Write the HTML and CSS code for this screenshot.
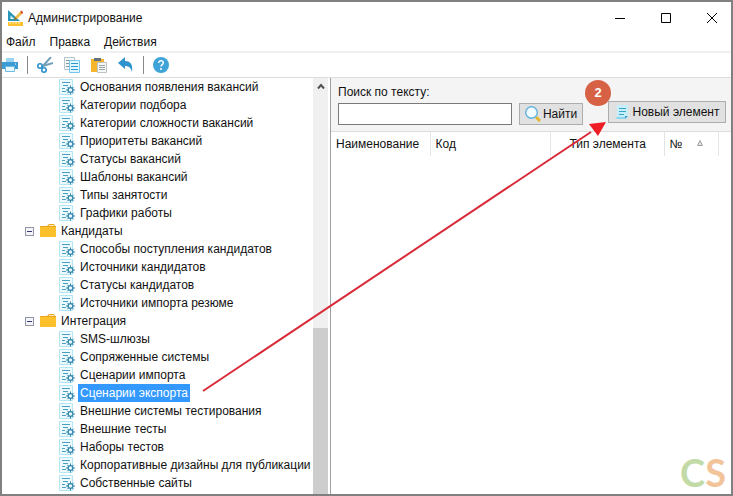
FILE: index.html
```html
<!DOCTYPE html>
<html lang="ru">
<head>
<meta charset="utf-8">
<title>Администрирование</title>
<link rel="stylesheet" href="styles.css">
</head>
<body>
<svg class="sprite" aria-hidden="true">
  <symbol id="doc" viewBox="0 0 16 16">
    <path d="M.5.5h13v15H.5z" fill="#edfafe" stroke="#b3e6f5"/>
    <path d="M3 3.500h8M4 6.500h5M3 9.500h3M3 12.500h4" stroke="#4c9fc4"/>
    <path d="M11.500 6.500v9M7 11h9M8.300 7.800l6.400 6.400M14.700 7.800l-6.400 6.400" stroke="#3285ac"/>
    <circle cx="11.500" cy="11" r="2.400" fill="#e8f8fd" stroke="#3285ac" stroke-width="1.300"/>
  </symbol>
  <symbol id="folder" viewBox="0 0 16 14">
    <path d="M0 2h7l2-2h5l1 2h1v11H0z" fill="#e9a61c"/>
    <path d="M9 1.500h5" stroke="#fff0c0"/>
    <path d="M0 3h16v10H0z" fill="#fcc02c"/>
  </symbol>
</svg>
<div class="window">
  <header class="titlebar">
    <svg class="app-icon" viewBox="0 0 16 16" aria-hidden="true">
      <path d="M1 0v11h12z" fill="#2796b8"/><path d="M3.500 5.500v3.500h4z" fill="#e4f7fc"/>
      <path d="M7 10l1-3 6-6 2 2-6 6z" fill="#eebd45"/><path d="M13 2l1.500-1.500 2 2L15 4z" fill="#d85532"/><path d="M7 10l1-3 2 2z" fill="#7a5a31"/>
      <path d="M1 12h15v4H1z" fill="#fcc22e"/><path d="M3 12v2M6 12v2M9 12v2M12 12v2" stroke="#fff0bd"/>
    </svg>
    <h1>Администрирование</h1>
    <div class="controls">
      <button aria-label="Свернуть"><svg viewBox="0 0 10 10"><path d="M0 5.500h10" /></svg></button>
      <button aria-label="Развернуть"><svg viewBox="0 0 10 10"><path d="M.5.500h9v9h-9z"/></svg></button>
      <button aria-label="Закрыть"><svg viewBox="0 0 10 10"><path d="M0 0l10 10M10 0L0 10"/></svg></button>
    </div>
  </header>
  <nav class="menu"><button>Файл</button><button>Правка</button><button>Действия</button></nav>
  <div class="toolbar">
    <button aria-label="Печать"><svg viewBox="0 0 16 16"><path d="M4 1h8v4H4z" fill="#9bd5f2"/><path d="M0 5h16v7H0z" fill="#3d9bd3"/><path d="M3.500 9.500h9v5h-9z" fill="#e9f7fd" stroke="#6abbe2"/><path d="M13 7h1" stroke="#fff"/></svg></button>
    <i class="sep"></i>
    <button aria-label="Вырезать"><svg viewBox="0 0 16 16" fill="none"><path d="M14 0L5 10M16 6L6 9" stroke="#739fb8" stroke-width="2"/><circle cx="3" cy="9" r="2.200" stroke="#2c91cc" stroke-width="1.600"/><circle cx="7" cy="13" r="2.200" stroke="#2c91cc" stroke-width="1.600"/></svg></button>
    <button aria-label="Копировать"><svg viewBox="0 0 16 16"><path d="M.5.500h10v12H.5z" fill="#f6f8f8" stroke="#b9c7cc"/><path d="M2 3.500h7M2 6.500h3M2 9.500h3" stroke="#8198a2"/><path d="M5.500 3.500h10v12h-10z" fill="#e2f6fe" stroke="#74c6ee"/><path d="M7 6.500h7M7 9.500h7M7 12.500h7" stroke="#2a9ad7"/></svg></button>
    <button aria-label="Вставить"><svg viewBox="0 0 16 16"><path d="M0 2h13v13H0z" fill="#f5b52d"/><path d="M3 1h7v3H3z" fill="#65717a"/><path d="M6.500 5.500h9v10h-9z" fill="#f5f6f5" stroke="#bcc3c5"/><path d="M8 8.500h6M8 10.500h6M8 12.500h6" stroke="#98a3a7"/></svg></button>
    <button aria-label="Отменить"><svg viewBox="0 0 16 16"><path d="M0 6l7-6v4c6 0 8 4 7 11-1-4-3-6-7-6v3z" fill="#2f93ce"/></svg></button>
    <i class="sep"></i>
    <button aria-label="Справка"><svg viewBox="0 0 16 16"><circle cx="8" cy="8" r="8" fill="#41a4d8"/><path d="M5.700 6c0-3.200 4.800-3 4.600 0 0 1.500-2.300 1.700-2.300 3.500M8 11v2" fill="none" stroke="#fff" stroke-width="1.500"/></svg></button>
  </div>
  <main class="content">
    <aside class="side">
      <ul class="tree">
        <li><svg><use href="#doc"/></svg><span>Основания появления вакансий</span></li>
        <li><svg><use href="#doc"/></svg><span>Категории подбора</span></li>
        <li><svg><use href="#doc"/></svg><span>Категории сложности вакансий</span></li>
        <li><svg><use href="#doc"/></svg><span>Приоритеты вакансий</span></li>
        <li><svg><use href="#doc"/></svg><span>Статусы вакансий</span></li>
        <li><svg><use href="#doc"/></svg><span>Шаблоны вакансий</span></li>
        <li><svg><use href="#doc"/></svg><span>Типы занятости</span></li>
        <li><svg><use href="#doc"/></svg><span>Графики работы</span></li>
        <li class="group"><button class="toggle" aria-label="Свернуть Кандидаты"></button><svg><use href="#folder"/></svg><span>Кандидаты</span></li>
        <li><svg><use href="#doc"/></svg><span>Способы поступления кандидатов</span></li>
        <li><svg><use href="#doc"/></svg><span>Источники кандидатов</span></li>
        <li><svg><use href="#doc"/></svg><span>Статусы кандидатов</span></li>
        <li><svg><use href="#doc"/></svg><span>Источники импорта резюме</span></li>
        <li class="group"><button class="toggle" aria-label="Свернуть Интеграция"></button><svg><use href="#folder"/></svg><span>Интеграция</span></li>
        <li><svg><use href="#doc"/></svg><span>SMS-шлюзы</span></li>
        <li><svg><use href="#doc"/></svg><span>Сопряженные системы</span></li>
        <li><svg><use href="#doc"/></svg><span>Сценарии импорта</span></li>
        <li class="selected"><svg><use href="#doc"/></svg><span>Сценарии экспорта</span></li>
        <li><svg><use href="#doc"/></svg><span>Внешние системы тестирования</span></li>
        <li><svg><use href="#doc"/></svg><span>Внешние тесты</span></li>
        <li><svg><use href="#doc"/></svg><span>Наборы тестов</span></li>
        <li><svg><use href="#doc"/></svg><span>Корпоративные дизайны для публикации</span></li>
        <li><svg><use href="#doc"/></svg><span>Собственные сайты</span></li>
      </ul>
      <div class="scrollbar">
        <button aria-label="Прокрутить вверх"><svg viewBox="0 0 8 8"><path d="M1 5.500l3-3.500 3 3.500"/></svg></button>
        <div class="thumb"></div>
      </div>
    </aside>
    <section class="panel">
      <form class="search">
        <div class="field">
          <label for="query">Поиск по тексту:</label>
          <input id="query" type="text">
        </div>
        <button class="btn find" type="button"><svg viewBox="0 0 16 16"><path d="M11 11l4 4" stroke="#e5b62b" stroke-width="3"/><circle cx="6.500" cy="6.500" r="5.800" fill="#f2fbff" stroke="#62b3dd" stroke-width="1.400"/></svg>Найти</button>
        <button class="btn create" type="button"><svg viewBox="0 0 16 16"><path d="M2 1h11v11l-2 3H2z" fill="#c4effb"/><path d="M4 4.500h7M4 7.500h7M4 10.500h5" stroke="#3ba4cb"/><path d="M1 13h9v2H2z" fill="#8cd5ed"/><path d="M10 15v-3h3z" fill="#3b9dc5"/></svg>Новый элемент</button>
      </form>
      <table>
        <colgroup><col class="c-name"><col class="c-code"><col class="c-type"><col class="c-num"><col></colgroup>
        <thead><tr><th>Наименование</th><th>Код</th><th class="type">Тип элемента</th><th>№<svg class="sort" viewBox="0 0 6 6" aria-label="По возрастанию"><path d="M3 .5L.5 5.500h5z"/></svg></th><td></td></tr></thead>
      </table>
      <div class="logo"><span>C</span><span>S</span></div>
    </section>
  </main>
  <svg class="arrow" viewBox="0 0 410 290" aria-hidden="true"><path d="M3 281L391 22" stroke="#d92a38" stroke-width="2"/><path d="M406 12l-8 14-9-12z" fill="#ee1c25"/></svg>
  <div class="badge">2</div>
</div>
</body>
</html>
```

FILE: styles.css
```css
* { box-sizing: border-box; }
body { margin: 0; font: 12px/18px "Liberation Sans", Arial, sans-serif; color: #111; }
button, input { font: inherit; color: inherit; }
button { padding: 0; border: 0; background: none; }
svg { display: block; flex: none; }
.sprite { display: none; }

.window { position: relative; display: flex; flex-direction: column; height: 100vh; border: 2px solid #808080; background: #fff; overflow: hidden; }
.titlebar { display: flex; align-items: center; flex: none; height: 31px; padding-left: 5px; }
.app-icon { width: 16px; height: 16px; }
h1 { margin: 0 0 0 5px; font-size: 12px; font-weight: 400; }
.controls { display: flex; margin-left: auto; padding-right: 4px; gap: 16px; }
.controls button { display: grid; place-items: center; width: 30px; height: 30px; }
.controls svg { width: 10px; height: 10px; fill: none; stroke: #000; }

.menu { display: flex; flex: none; gap: 14px; height: 20px; padding-left: 4px; border-bottom: 2px solid #f0f0f0; }
.toolbar { display: flex; align-items: center; flex: none; gap: 11px; height: 25px; border-bottom: 1px solid #dcdcdc; }
.toolbar svg { width: 16px; height: 16px; }
.toolbar .sep { width: 1px; height: 18px; margin: 0 -2px; background: #8a8a8a; }

.content { display: flex; flex: 1; min-height: 0; }
.side { display: flex; flex: none; width: 329px; padding-right: 2px; border-right: 1px solid #a0a0a0; overflow: hidden; }
.tree { flex: 1; min-width: 0; margin: 0; padding: 0; overflow: hidden; list-style: none; white-space: nowrap; }
.tree li { display: flex; align-items: center; height: 18px; padding-left: 57px; }
.tree svg { width: 16px; height: 16px; margin-right: 3px; }
.tree span { padding: 0 2px; }
.tree .group { padding-left: 23px; }
.tree .group svg { height: 14px; }
.toggle { display: grid; place-items: center; width: 9px; height: 9px; margin-right: 6px; border: 1px solid #9095a8; background: #f3f3f8; }
.toggle::before { content: ""; width: 5px; height: 1px; background: #343c70; }
.selected span { background: #3399ff; color: #fff; }
.scrollbar { display: flex; flex-direction: column; flex: none; justify-content: space-between; width: 15px; background: #f0f0f0; }
.scrollbar button { display: grid; place-items: center; height: 17px; }
.scrollbar svg { width: 8px; height: 8px; fill: none; stroke: #505050; stroke-width: 2; }
.thumb { height: 40%; background: #cdcdcd; }

.panel { display: flex; flex-direction: column; flex: 1; min-width: 0; }
.search { display: flex; align-items: flex-end; flex: none; height: 54px; padding: 0 5px 6px 7px; border-bottom: 1px solid #dcdcdc; background: #f4f4f4; }
.field { display: grid; flex: 1; gap: 2px; max-width: 174px; }
.field input { width: 100%; height: 22px; padding: 0 4px; border: 1px solid #7a7a7a; background: #fff; }
.btn { display: flex; align-items: center; justify-content: center; gap: 2px; height: 22px; border: 1px solid #adadad; background: #e1e1e1; white-space: nowrap; }
.btn svg { width: 16px; height: 16px; }
.find { width: 64px; margin-left: 7px; }
.create { width: 118px; margin: 0 0 2px auto; }

table { width: 100%; border-collapse: collapse; table-layout: fixed; }
.c-name { width: 99px; }
.c-code { width: 120px; }
.c-type { width: 114px; }
.c-num { width: 54px; }
th, td { height: 24px; padding: 0 0 0 5px; border-right: 1px solid #e5e5e5; font-weight: 400; text-align: left; white-space: nowrap; }
td { border: 0; }
th.type { padding-left: 19px; }
.sort { display: inline-block; width: 6px; height: 6px; margin-left: 15px; vertical-align: 2px; fill: #e2e2e2; stroke: #a0a0a0; }
.logo { margin: auto 5px -1px auto; font: 700 38px/46px Lato, sans-serif; }
.logo span:first-child { color: #c2dba6; }
.logo span:last-child { color: #f3c49a; }

.arrow { position: absolute; top: 108px; left: 198px; width: 410px; height: 290px; pointer-events: none; }
.badge { position: absolute; top: 78px; left: 583px; width: 26px; height: 26px; border-radius: 50%; background: #d66144; color: #fff; font: bold 13px/26px "Liberation Sans", sans-serif; text-align: center; }
```
